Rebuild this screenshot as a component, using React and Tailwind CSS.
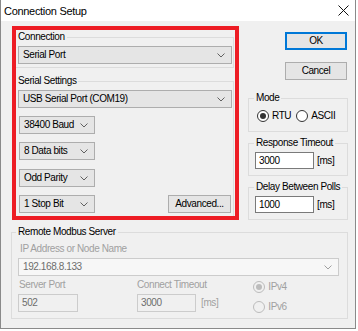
import React from "react";

const font = { fontFamily: '"Liberation Sans", Arial, sans-serif' };

function Chevron({ color = "#606060" }) {
  return (
    <svg width="8" height="5" viewBox="0 0 8 5" className="shrink-0">
      <polyline points="0.5,0.5 4,4 7.5,0.5" fill="none" stroke={color} strokeWidth="1" />
    </svg>
  );
}

function Combo({ text, className = "", disabled = false }) {
  return (
    <div
      className={
        "flex items-center justify-between h-[18px] pl-[4px] pr-[6px] border " +
        (disabled
          ? "bg-[#f7f7f7] border-[#cccccc] text-[#6d6d6d] "
          : "bg-[#e5e5e5] border-[#adadad] text-black ") +
        className
      }
    >
      <span className="leading-[12px] whitespace-nowrap">{text}</span>
      <Chevron color={disabled ? "#a0a0a0" : "#606060"} />
    </div>
  );
}

function Radio({ checked, disabled, label }) {
  return (
    <div className="flex items-center h-[12px]">
      <div
        className={
          "w-[12px] h-[12px] rounded-full border flex items-center justify-center " +
          (disabled ? "border-[#bcbcbc] bg-[#f0f0f0]" : "border-[#333333] bg-white")
        }
      >
        {checked && (
          <div className={"w-[6px] h-[6px] rounded-full " + (disabled ? "bg-[#bcbcbc]" : "bg-[#333333]")} />
        )}
      </div>
      <span className={"ml-[3px] leading-[12px] " + (disabled ? "text-[#a0a0a0]" : "text-black")}>{label}</span>
    </div>
  );
}

export default function App() {
  return (
    <div className="bg-white w-[358px] h-[331px]" style={font}>
      <div className="w-[356px] h-[329px] border-x border-b border-[#8a8a8a] bg-[#f0f0f0] flex flex-col text-[10px] tracking-[-0.4px] text-black">
        {/* Title bar */}
        <div className="h-[21px] bg-white flex items-center justify-between pl-[3px] pr-[6px] shrink-0">
          <span className="text-[11px] tracking-[-0.3px] leading-[14px]">Connection Setup</span>
          <svg width="11" height="11" viewBox="0 0 11 11">
            <path d="M0.5 0.5 L10.5 10.5 M10.5 0.5 L0.5 10.5" stroke="#111" strokeWidth="1" />
          </svg>
        </div>

        {/* Top columns */}
        <div className="flex pl-[11px]">
          {/* Left: red box */}
          <div className="mt-[5px] w-[227px] h-[194px] border-4 border-[#ed1c24] flex flex-col">
            <fieldset className="mt-[1px] w-[218px] h-[37px] border border-l-0 border-[#dcdcdc]">
              <legend className="px-[2px] leading-[12px]">Connection</legend>
              <Combo text="Serial Port" className="mt-[3px] ml-[2px] w-[214px]" />
            </fieldset>
            <fieldset className="mt-[7px] w-[218px] h-[141px] border border-l-0 border-b-0 border-[#dcdcdc]">
              <legend className="px-[2px] leading-[12px]">Serial Settings</legend>
              <Combo text="USB Serial Port (COM19)" className="mt-[3px] ml-[2px] w-[214px]" />
              <Combo text="38400 Baud" className="mt-[8px] ml-[3px] w-[76px]" />
              <Combo text="8 Data bits" className="mt-[8px] ml-[3px] w-[76px]" />
              <Combo text="Odd Parity" className="mt-[9px] ml-[3px] w-[76px]" />
              <div className="mt-[8px] flex items-center justify-between">
                <Combo text="1 Stop Bit" className="ml-[3px] w-[76px]" />
                <div className="mr-[2px] w-[63px] h-[18px] bg-[#e5e5e5] border border-[#adadad] flex items-center justify-center leading-[12px]">
                  Advanced...
                </div>
              </div>
            </fieldset>
          </div>

          {/* Right column */}
          <div className="ml-[9px] w-[100px] flex flex-col">
            <div className="mt-[11px] ml-[37px] w-[62px] h-[18px] bg-[#e5e5e5] border-2 border-[#0078d7] flex items-center justify-center leading-[12px]">
              OK
            </div>
            <div className="mt-[12px] ml-[37px] w-[62px] h-[18px] bg-[#e5e5e5] border border-[#adadad] flex items-center justify-center leading-[12px]">
              Cancel
            </div>
            <fieldset className="mt-[12px] w-[100px] h-[40px] border border-[#dcdcdc]">
              <legend className="ml-[5px] px-[2px] leading-[12px]">Mode</legend>
              <div className="mt-[6px] ml-[8px] flex items-center gap-[5px]">
                <Radio checked label="RTU" />
                <Radio label="ASCII" />
              </div>
            </fieldset>
            <fieldset className="mt-[5px] w-[100px] h-[39px] border border-[#dcdcdc]">
              <legend className="ml-[5px] px-[2px] leading-[12px]">Response Timeout</legend>
              <div className="mt-[3px] ml-[6px] flex items-center">
                <div className="w-[59px] h-[17px] bg-white border border-[#7a7a7a] pl-[3px] flex items-center leading-[12px]">3000</div>
                <span className="ml-[3px] leading-[12px]">[ms]</span>
              </div>
            </fieldset>
            <fieldset className="mt-[5px] w-[100px] h-[39px] border border-[#dcdcdc]">
              <legend className="ml-[5px] px-[2px] leading-[12px]">Delay Between Polls</legend>
              <div className="mt-[3px] ml-[6px] flex items-center">
                <div className="w-[59px] h-[17px] bg-white border border-[#7a7a7a] pl-[3px] flex items-center leading-[12px]">1000</div>
                <span className="ml-[3px] leading-[12px]">[ms]</span>
              </div>
            </fieldset>
          </div>
        </div>

        {/* Remote Modbus Server */}
        <fieldset className="mt-[6px] ml-[10px] w-[337px] h-[93px] border border-[#dcdcdc]">
          <legend className="ml-[4px] px-[2px] leading-[12px]">Remote Modbus Server</legend>
          <div className="mt-[5px] ml-[8px] leading-[12px] text-[#a0a0a0]">IP Address or Node Name</div>
          <Combo text="192.168.8.133" disabled className="mt-[3px] ml-[6px] w-[321px]" />
          <div className="flex mt-[3px] ml-[6px]">
            <div className="flex flex-col w-[60px]">
              <div className="ml-[1px] leading-[12px] text-[#a0a0a0]">Server Port</div>
              <div className="mt-[3px] w-[60px] h-[18px] bg-[#f0f0f0] border border-[#cccccc] pl-[3px] flex items-center text-[#6d6d6d] leading-[12px]">502</div>
            </div>
            <div className="flex flex-col ml-[59px]">
              <div className="leading-[12px] text-[#a0a0a0]">Connect Timeout</div>
              <div className="mt-[3px] flex items-center">
                <div className="w-[59px] h-[18px] bg-[#f0f0f0] border border-[#cccccc] pl-[3px] flex items-center text-[#6d6d6d] leading-[12px]">3000</div>
                <span className="ml-[5px] leading-[12px] text-[#a0a0a0]">[ms]</span>
              </div>
            </div>
            <div className="flex flex-col ml-[35px] mt-[2px] gap-[8px]">
              <Radio checked disabled label="IPv4" />
              <Radio disabled label="IPv6" />
            </div>
          </div>
        </fieldset>
      </div>
    </div>
  );
}
